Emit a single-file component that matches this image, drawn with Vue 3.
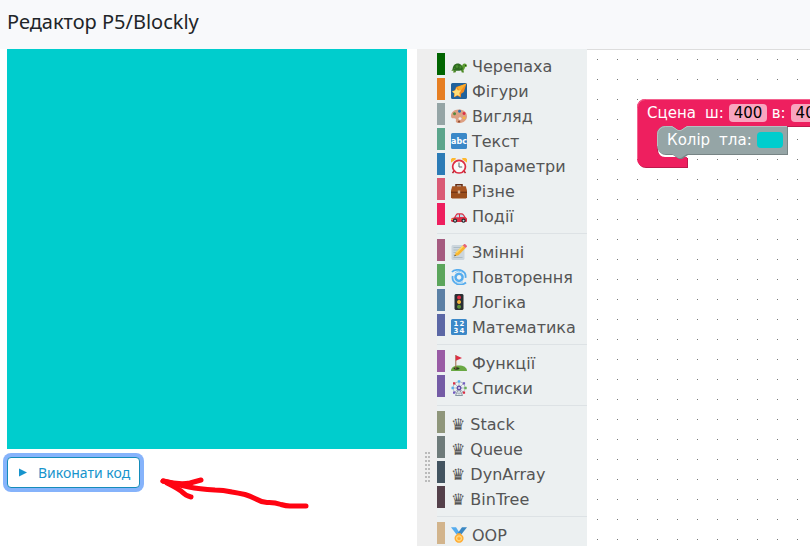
<script setup>
import { ref } from 'vue'

const sceneWidth = ref('400')
const sceneHeight = ref('400')

const icons = {
  turtle: [
    { d: 'M3 12l-1 2.6h2.4l1-2zM10 12l.8 2.6h2.2l-.8-3zM2 11L.2 12.8 3 12.6z', fill: '#4c8a26' },
    { d: 'M11 9.5c0-3 1-4 2.600-4 1.500 0 2.400 1 2.400 2.300 0 1-.8 1.400-2 1.500-.5 1.800-1 3-2.500 3.400z', fill: '#5c9e31' },
    { d: 'M1.500 11.500C1.800 7.500 4 5.500 6.800 5.500c3 0 4.900 2.300 5.200 6 -2.500 1.800-8 1.800-10.500 0z', fill: '#2d6b20' },
    { d: 'M4.500 8l1.500-1.300 1.500 1.300-.5 1.700H5zM8.500 8.200l1.300-.7 1 1.700-1 1.300H8.500zM2.600 10.800l1-1.300.8 1.500z', fill: '#498d2f' },
    { d: 'M14 7h1v1h-1z', fill: '#243c1c' },
  ],
  star: [
    { d: 'M1.500 0h13A1.500 1.500 0 0 1 16 1.500v13a1.500 1.500 0 0 1-1.500 1.500h-13A1.500 1.500 0 0 1 0 14.500v-13A1.500 1.500 0 0 1 1.500 0z', fill: '#20629c' },
    { d: 'M15.500.5L5 4 4.200 7 1 8.500l2.500 2-.6 3.800 3.600-1.500 3.400 1.700.2-3.700L12.800 9z', fill: '#f18a21' },
    { d: 'M15.500.5L6 4.300 9 8.500z', fill: '#fbb02d' },
    { d: 'M5.300 5l1.500 2.300 3.300.1-1.800 2.700.8 3.100-2.900-1.200L3.300 14l.3-3.500L1.100 8.400l3.100-.8z', fill: '#ffdc75' },
  ],
  palette: [
    { d: 'M7.500 1.500C3 1.500 0 4.400 0 8c0 1.900 1 2.500 2.600 2.300 1.800-.2 2.700.7 2.300 2.100-.5 1.500.5 2.600 3.100 2.600 4.800 0 8-3 8-6.800 0-4-3.600-6.700-8.500-6.700z', fill: '#dda083' },
    { d: 'M9 9.300a1.600 1.300 0 1 0 .1 0z', fill: '#f1eceb' },
    { d: 'M3.500 4.300a1.500 1.500 0 1 0 .1 0z', fill: '#56883e' },
    { d: 'M8.500 1.800a1.500 1.500 0 1 0 .1 0z', fill: '#2c71ad' },
    { d: 'M13 4a1.500 1.500 0 1 0 .1 0z', fill: '#db2e48' },
    { d: 'M13 8.500a1.400 1.400 0 1 0 .1 0z', fill: '#f5b640' },
    { d: 'M8 12.500a1.200 1 0 1 0 .1 0z', fill: '#924f36' },
  ],
  abc: [
    { d: 'M1.500 0h13A1.500 1.500 0 0 1 16 1.500v13a1.500 1.500 0 0 1-1.500 1.500h-13A1.500 1.500 0 0 1 0 14.500v-13A1.500 1.500 0 0 1 1.500 0z', fill: '#3b88c8' },
    { text: 'abc', x: 8, y: 11, size: 8 },
  ],
  clock: [
    { d: 'M3 13l-1.500 2.200M13 13l1.500 2.200', stroke: '#b8232d', w: 1.5 },
    { d: 'M.2 4.500A3 3 0 0 1 5.200 1zM15.800 4.500A3 3 0 0 0 10.800 1z', fill: '#ffb82e' },
    { d: 'M8 2.400a6.300 6.300 0 1 0 .1 0z', fill: '#fafafa', stroke: '#dd2e44', w: 1.700 },
    { d: 'M8 4.500V9h3.200', stroke: '#59666f', w: 1 },
  ],
  case: [
    { d: 'M5 4V1.800h6V4', stroke: '#632d16', w: 1.500 },
    { d: 'M1.500 3.500h13l1.500 5v5.800L15 15.500H1l-1-1.200V8.500z', fill: '#9a4e1c' },
    { d: 'M1 3.500h14l1 5.500H0z', fill: '#a95622' },
    { d: 'M0 8.700h16v1H0z', fill: '#682f13' },
    { d: 'M6.800 7.500h2.400v3H6.800z', fill: '#d8b89b' },
  ],
  car: [
    { d: 'M3 9.500l2-3.300C5.500 5.500 6 5.300 7 5.300h3.500c1 0 1.700.4 2.300 1.200l1.700 2.500 1.500 1.500v2.800l-.6.700H1l-1-1v-2l1-1z', fill: '#dd2e44' },
    { d: 'M4.500 9.200l1.300-2.200c.2-.4.600-.6 1-.6H8v2.800zM9 6.400h1.500c.6 0 1 .2 1.300.7l1.300 2H9z', fill: '#c1dceb' },
    { d: 'M0 10.700h2v1H0z', fill: '#ffcc4d' },
    { d: 'M4 10.500a2.100 2.100 0 1 0 .1 0zM12.500 10.500a2.100 2.100 0 1 0 .1 0z', fill: '#292f33' },
    { d: 'M4 11.700a.9.900 0 1 0 .1 0zM12.500 11.700a.9.900 0 1 0 .1 0z', fill: '#ccd6dd' },
  ],
  memo: [
    { d: 'M1.500 1h11l1 1v13l-1 1h-11l-1-1V2z', fill: '#ccd6dd' },
    { d: 'M2.500 3.500h9M2.500 6h6M2.500 8.500h4M2.500 11h3M2.500 13.500h9', stroke: '#a5b5be', w: 0.8 },
    { d: 'M3.300 12.300L5 8.300l7-7 2.700 2.700-7.200 7.200z', fill: '#f8b630' },
    { d: 'M5 8.300l7-7 1 1-7.200 7z', fill: '#ffdc68' },
    { d: 'M11.800 1.500L13 .3c.6-.5 1-.4 1.600.1l1 1c.5.6.5 1 0 1.600L14.500 4z', fill: '#e66577' },
    { d: 'M3.300 12.300l.6-1.500 1 1z', fill: '#292f33' },
  ],
  cyclone: [
    { d: 'M8 4.800a3.600 3.600 0 1 0 .1 0z', stroke: '#55acee', w: 2.600 },
    { d: 'M1 3C3 .6 8 .3 11 1.800c3 1.500 4 4 3.500 7M15 13.500c-2 2-6 2.700-9.300 1.300C2.700 13.300 1 10.500 1.700 7', stroke: '#55acee', w: 1.800 },
    { d: 'M4 4c2-2 5-2.300 7.500-.5M12 12.700c-2 2-5 2-7.500.5', stroke: '#8ccaf5', w: 1 },
    { d: 'M8 7.200a1.200 1.200 0 1 0 .1 0z', fill: '#eaf5fc' },
  ],
  light: [
    { d: 'M4.500 0h7l1 1v14l-1 1h-7l-1-1V1z', fill: '#292f33' },
    { d: 'M8 1.400a2 2 0 1 0 .1 0z', fill: '#dd2e44' },
    { d: 'M8 6a2 2 0 1 0 .1 0z', fill: '#f5b53c' },
    { d: 'M8 10.700a2 2 0 1 0 .1 0z', fill: '#5c9138' },
  ],
  digits: [
    { d: 'M1.500 0h13A1.500 1.500 0 0 1 16 1.500v13a1.500 1.500 0 0 1-1.500 1.500h-13A1.500 1.500 0 0 1 0 14.500v-13A1.500 1.500 0 0 1 1.500 0z', fill: '#3b88c8' },
    { text: '1', x: 5, y: 7, size: 7 },
    { text: '2', x: 11, y: 7, size: 7 },
    { text: '3', x: 5, y: 14, size: 7 },
    { text: '4', x: 11, y: 14, size: 7 },
  ],
  flag: [
    { d: 'M0 16c0-4 3.500-5.500 8-5.500s8 1.800 8 5.500z', fill: '#69a843' },
    { d: 'M5.500 12.300a3 1.200 0 1 0 .1 0z', fill: '#29371f' },
    { d: 'M4.800 0v14', stroke: '#9e6848', w: 1 },
    { d: 'M4.800.2L11 3 4.800 5.700z', fill: '#dd2e44' },
  ],
  wheel: [
    { d: 'M8 8L4.500 15.500h7z', stroke: '#8595a1', w: 1 },
    { d: 'M8 1.800a6 6 0 1 0 .1 0z', stroke: '#a4b1bb', w: 0.9 },
    { d: 'M8 1.500v13M1.500 8h13M3.400 3.400l9.200 9.200M12.600 3.400l-9.200 9.200', stroke: '#9baab5', w: 0.7 },
    { d: 'M6.800.3h2.400v2.300H6.800zM.5 6.800h2.300v2.400H.5z', fill: '#55acee' },
    { d: 'M2 2.300h2.300v2.200H2zM11.800 11.500h2.300v2.300h-2.300z', fill: '#dd2e44' },
    { d: 'M11.800 2.300h2.300v2.200h-2.300zM2 11.500h2.300v2.300H2z', fill: '#725ac1' },
    { d: 'M13.300 6.800h2.400v2.400h-2.400z', fill: '#68ae55' },
    { d: 'M8 5.400a2.500 2.500 0 1 0 .1 0z', fill: '#6450aa' },
    { d: 'M8 7.100a.9.900 0 1 0 .1 0z', fill: '#e7e3f4' },
  ],
  medal: [
    { d: 'M0 .2h5l4.500 7-3 1.500z', fill: '#55acee' },
    { d: 'M16 .2h-5l-5 7 3.500 1.300z', fill: '#3b88c3' },
    { d: 'M6 6.300h4v1.500H6z', fill: '#ffac33' },
    { d: 'M8 6.800a4.500 4.500 0 1 0 .1 0z', fill: '#ffac33' },
    { d: 'M8 8.200a3.100 3.100 0 1 0 .1 0z', fill: '#ffd983' },
    { d: 'M8 9l.7 1.500 1.700.2-1.200 1.200.3 1.700-1.500-.8-1.500.8.3-1.700-1.200-1.200 1.700-.2z', fill: '#ffac33' },
  ],
}

const groups = [
  [
    { name: 'Черепаха', color: '#006400', icon: 'turtle' },
    { name: 'Фігури', color: '#e67e22', icon: 'star' },
    { name: 'Вигляд', color: '#95a5a6', icon: 'palette' },
    { name: 'Текст', color: '#5ba58c', icon: 'abc' },
    { name: 'Параметри', color: '#2c7bb6', icon: 'clock' },
    { name: 'Різне', color: '#da5a75', icon: 'case' },
    { name: 'Події', color: '#ee1f5f', icon: 'car' },
  ],
  [
    { name: 'Змінні', color: '#a55b80', icon: 'memo' },
    { name: 'Повторення', color: '#5ba55b', icon: 'cyclone' },
    { name: 'Логіка', color: '#5b80a5', icon: 'light' },
    { name: 'Математика', color: '#5b67a5', icon: 'digits' },
  ],
  [
    { name: 'Функції', color: '#995ba5', icon: 'flag' },
    { name: 'Списки', color: '#745ba5', icon: 'wheel' },
  ],
  [
    { name: 'Stack', color: '#8f967b' },
    { name: 'Queue', color: '#6e7b7a' },
    { name: 'DynArray', color: '#435460' },
    { name: 'BinTree', color: '#54404a' },
  ],
  [{ name: 'OOP', color: '#d2b48c', icon: 'medal' }],
]
</script>

<template>
  <div class="page">
    <header class="header">
      <h1>Редактор P5/Blockly</h1>
    </header>
    <main class="editor">
      <section class="preview">
        <div class="stage"></div>
        <button class="run" type="button">
          <svg class="play" viewBox="0 0 8 9"><path d="M0 0.500L8 4.500L0 8.500Z" /></svg>
          Виконати код
        </button>
        <svg class="arrow" viewBox="0 0 152 36">
          <path d="M147 30H131Q127 30 122 28.500Q115 26 108 26.500Q102 26 97 23Q91 20 86 18.500Q79 17 73 16Q64 14 56 14Q40 13 30 11Q16 8 4 5" />
          <path d="M4 5Q20 9 31 7L42 4M8 7Q18 12 22 15Q27 20 32 21" />
        </svg>
      </section>
      <div class="gutter"><span class="grip"></span></div>
      <nav class="toolbox">
        <ul v-for="(group, g) in groups" :key="g" class="group">
          <li v-for="item in group" :key="item.name">
            <button type="button" class="category" :style="{ borderLeftColor: item.color }">
              <svg v-if="item.icon" class="icon" viewBox="0 0 16 16">
                <template v-for="(s, i) in icons[item.icon]" :key="i">
                  <text v-if="s.text" :x="s.x" :y="s.y" :font-size="s.size" text-anchor="middle">{{ s.text }}</text>
                  <path v-else :d="s.d" :fill="s.fill || 'none'" :stroke="s.stroke || 'none'" :stroke-width="s.w" />
                </template>
              </svg>
              <span v-else class="crown">♛</span>
              <span>{{ item.name }}</span>
            </button>
          </li>
        </ul>
      </nav>
      <section class="workspace">
        <svg class="grid">
          <defs>
            <pattern id="dots" width="20" height="20" patternUnits="userSpaceOnUse">
              <rect x="10" y="9" width="1" height="1" fill="#777" />
            </pattern>
          </defs>
          <rect width="100%" height="100%" fill="url(#dots)" />
        </svg>
        <div class="block scene">
          <svg class="shape" width="300" height="70">
            <path fill="#be194c" d="M1 9a8 8 0 0 1 8-8H300V28H51l-6 4h-3l-6-4H29a8 8 0 0 0-8 8V51a8 8 0 0 0 8 8H51V69H9a8 8 0 0 1-8-8z" />
            <path fill="#ee1f5f" d="M0 8a8 8 0 0 1 8-8H300V27H50l-6 4h-3l-6-4H28a8 8 0 0 0-8 8V50a8 8 0 0 0 8 8H50V68H8a8 8 0 0 1-8-8z" />
            <path fill="none" stroke="#f4628f" d="M.5 60V8.500a8 8 0 0 1 8-8H300" />
          </svg>
          <div class="fields">
            <span class="title">Сцена</span>
            <label for="scene-w">ш:</label>
            <input id="scene-w" v-model="sceneWidth" type="text" />
            <label for="scene-h">в:</label>
            <input id="scene-h" v-model="sceneHeight" type="text" />
          </div>
        </div>
        <div class="block backdrop">
          <svg class="shape" width="132" height="34">
            <path fill="#778485" d="M1 9a8 8 0 0 1 8-8h7l6 4h3l6-4h100v28H31l-6 4h-3l-6-4H9a8 8 0 0 1-8-8z" />
            <path fill="#95a5a6" d="M0 8a8 8 0 0 1 8-8h7l6 4h3l6-4h100v28H30l-6 4h-3l-6-4H8a8 8 0 0 1-8-8z" />
            <path fill="none" stroke="#b5c0c1" d="M.5 20V8.500a8 8 0 0 1 8-8H15l6 4h3l6-4h100" />
          </svg>
          <div class="fields">
            <span class="title">Колір</span>
            <span>тла:</span>
            <button class="swatch" type="button" aria-label="Колір тла"></button>
          </div>
        </div>
      </section>
    </main>
  </div>
</template>

<style>
body {
  margin: 0;
  overflow: hidden;
}
</style>

<style scoped>
.page {
  display: flex;
  flex-direction: column;
  height: 100vh;
  background: #fff;
  font-family: "Noto Sans", sans-serif;
}
.header {
  padding: 8px 7px 13px;
  background: #f8f9fb;
}
h1 {
  margin: 0;
  font-size: 20px;
  line-height: 28px;
  font-weight: 400;
  color: #212529;
}
.editor {
  display: flex;
  flex: 1;
  min-height: 0;
}
.preview {
  position: relative;
  flex: none;
  padding: 0 10px 0 7px;
}
.stage {
  width: 400px;
  height: 400px;
  background: #00cdcd;
}
.run {
  display: flex;
  align-items: center;
  gap: 11px;
  margin-top: 8px;
  padding: 5px 9px 5px 11px;
  border: 1px solid #158cba;
  border-radius: 4px;
  background: #fff;
  box-shadow: 0 0 0 4px #86b3fb;
  color: #1794cc;
  font-family: inherit;
  font-size: 14px;
  line-height: 19px;
}
.play {
  width: 8px;
  height: 9px;
  fill: #1794cc;
}
.arrow {
  position: absolute;
  left: 159px;
  top: 427px;
  width: 152px;
  height: 36px;
  fill: none;
  stroke: #ff0412;
  stroke-width: 5;
  stroke-linecap: round;
  stroke-linejoin: round;
}
.gutter {
  display: flex;
  flex: none;
  width: 20px;
  padding-top: 403px;
  justify-content: center;
  align-items: flex-start;
  background: #eee;
}
.grip {
  width: 5px;
  height: 30px;
  background: repeating-linear-gradient(90deg, transparent 0 2px, #eee 2px 3px),
    repeating-linear-gradient(#bbb 0 2px, transparent 2px 4px);
}
.toolbox {
  flex: none;
  width: 150px;
  padding-top: 4px;
  overflow: hidden;
  background: #ecf0f1;
  font-family: "DejaVu Sans", sans-serif;
}
.group {
  margin: 0;
  padding: 0 0 5px;
  list-style: none;
}
.group + .group {
  padding-top: 5px;
  border-top: 1px solid #dde2e5;
}
.category {
  display: flex;
  gap: 5px;
  width: 100%;
  height: 22px;
  margin: 0 0 3px;
  padding: 5px 0 0 6px;
  border: 0;
  border-left: 8px solid;
  background: none;
  color: #555;
  font-family: inherit;
  font-size: 16px;
  line-height: 18px;
  text-align: left;
}
.icon {
  flex: none;
  width: 16px;
  height: 16px;
}
.icon text {
  fill: #fff;
  font-weight: 700;
}
.workspace {
  position: relative;
  flex: 1;
  min-width: 0;
  overflow: hidden;
  border-top: 1px solid #ddd;
  font-family: "DejaVu Sans", sans-serif;
}
.grid {
  display: block;
  width: 100%;
  height: 100%;
}
.block {
  position: absolute;
  color: #fff;
  font-size: 15px;
}
.scene {
  left: 50px;
  top: 49px;
}
.backdrop {
  left: 70px;
  top: 76px;
}
.shape {
  position: absolute;
  left: 0;
  top: 0;
}
.fields {
  position: relative;
  display: flex;
  align-items: center;
  gap: 5px;
  height: 28px;
  padding-left: 10px;
  white-space: nowrap;
}
.title {
  margin-right: 4px;
}
.fields input {
  box-sizing: border-box;
  width: 38px;
  height: 18px;
  padding: 0 5px;
  border: 0;
  border-radius: 4px;
  background: #f8a5bf;
  color: #000;
  font: inherit;
}
.swatch {
  width: 26px;
  height: 16px;
  padding: 0;
  border: 0;
  border-radius: 4px;
  background: #00cdcd;
}
</style>
